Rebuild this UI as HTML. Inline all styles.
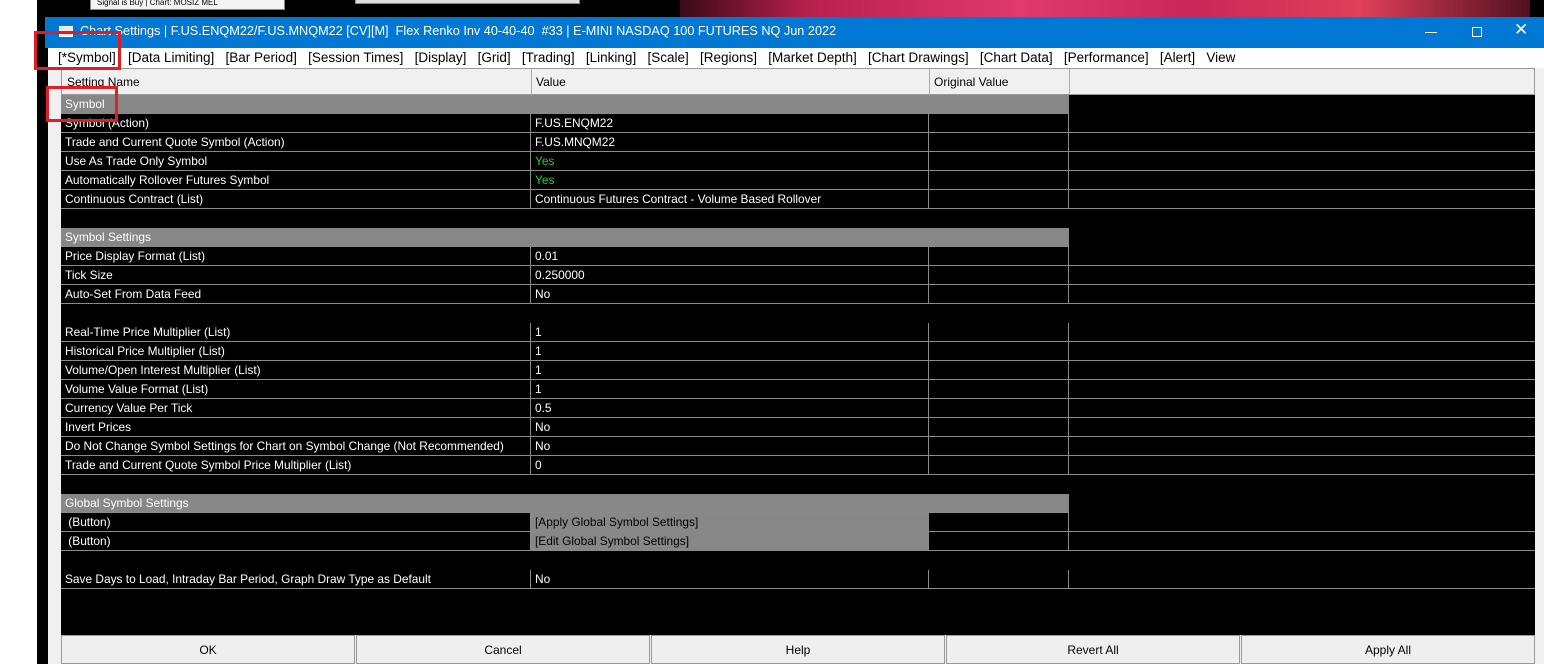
<!DOCTYPE html>
<html><head><meta charset="utf-8"><style>
*{margin:0;padding:0;box-sizing:border-box}
body{width:1544px;height:664px;overflow:hidden;background:#fff;position:relative;font-family:"Liberation Sans",sans-serif;font-size:11.9px}
.a{position:absolute}
.r{position:absolute;left:61px;width:1474px;height:19px;background:#000;color:#fff}
.c{position:absolute;top:0;height:19px;line-height:19px;padding-left:4px;border-right:1px solid #8a8a8a;border-bottom:1px solid #8a8a8a;white-space:nowrap;overflow:hidden}
.c1{left:0;width:470px}.c2{left:470px;width:398px}.c3{left:868px;width:140px}.c4{left:1008px;width:466px;border-right:none}
.sec .c1{width:1008px;background:#878787;border-right:none}
.g{color:#1fd61f}
.btn{position:absolute;top:635px;height:29px;width:294px;background:#efefef;border:1px solid #999;text-align:center;line-height:28px;color:#000;font-size:12px}
.m{position:absolute;top:50px;font-size:13.5px;color:#000;white-space:nowrap}
</style></head><body>
<div class="a" style="left:37px;top:0;width:1507px;height:664px;background:#000"></div>
<div class="a" style="left:680px;top:0;width:850px;height:17px;background:linear-gradient(90deg,#3a0a18,#b8204e 15%,#e03a70 40%,#c8285a 60%,#e0405a 80%,#501020)"></div>
<div class="a" style="left:90px;top:0;width:195px;height:10px;background:#f4f4f4;border:1px solid #888;border-top:none;font-size:8px;line-height:6px;padding-left:6px;overflow:hidden">Signal is Buy | Chart: MOSIZ MEL</div>
<div class="a" style="left:355px;top:0;width:225px;height:4px;background:#ddd;border:1px solid #888;border-top:none"></div>
<div class="a" style="left:45px;top:17px;width:1499px;height:31px;background:#0078d4"></div>
<div class="a" style="left:59px;top:26px;width:14px;height:11px;background:#e8e8e8;border:1px solid #fff"></div>
<div class="a" style="left:80px;top:24px;color:#fff;font-size:12.7px;white-space:nowrap">Chart Settings | F.US.ENQM22/F.US.MNQM22 [CV][M]&nbsp; Flex Renko Inv 40-40-40&nbsp; #33 | E-MINI NASDAQ 100 FUTURES NQ Jun 2022</div>
<div class="a" style="left:1425px;top:32px;width:12px;height:1px;background:#fff"></div>
<div class="a" style="left:1472px;top:27px;width:10px;height:10px;border:1px solid #fff"></div>
<div class="a" style="left:1514px;top:20px;color:#fff;font-size:17px">✕</div>
<div class="a" style="left:48px;top:48px;width:1496px;height:616px;background:#f0f0f0"></div>
<div class="a" style="left:48px;top:48px;width:1496px;height:20px;background:#fff"></div>
<div class="m" style="left:58px">[*Symbol]</div>
<div class="m" style="left:128px">[Data Limiting]&nbsp;&nbsp; [Bar Period]&nbsp;&nbsp; [Session Times]&nbsp;&nbsp; [Display]&nbsp;&nbsp; [Grid]&nbsp;&nbsp; [Trading]&nbsp;&nbsp; [Linking]&nbsp;&nbsp; [Scale]&nbsp;&nbsp; [Regions]&nbsp;&nbsp; [Market Depth]&nbsp;&nbsp; [Chart Drawings]&nbsp;&nbsp; [Chart Data]&nbsp;&nbsp; [Performance]&nbsp;&nbsp; [Alert]&nbsp;&nbsp; View</div>
<div class="a" style="left:61px;top:68px;width:1474px;height:567px;background:#000"></div>
<div class="a" style="left:61px;top:68px;width:1474px;height:27px;background:#f0f0f0;border:1px solid #999;font-size:12px">
<div class="a" style="left:5px;top:6px">Setting Name</div>
<div class="a" style="left:469px;top:0;height:26px;border-left:1px solid #aaa;padding:6px 4px">Value</div>
<div class="a" style="left:867px;top:0;height:26px;border-left:1px solid #aaa;padding:6px 4px">Original Value</div>
<div class="a" style="left:1007px;top:0;height:26px;border-left:1px solid #aaa"></div>
</div>

<div class="r sec" style="top:95px"><div class="c c1">Symbol</div></div>
<div class="r" style="top:114px"><div class="c c1">Symbol (Action)</div><div class="c c2">F.US.ENQM22</div><div class="c c3"></div><div class="c c4"></div></div>
<div class="r" style="top:133px"><div class="c c1">Trade and Current Quote Symbol (Action)</div><div class="c c2">F.US.MNQM22</div><div class="c c3"></div><div class="c c4"></div></div>
<div class="r" style="top:152px"><div class="c c1">Use As Trade Only Symbol</div><div class="c c2 g">Yes</div><div class="c c3"></div><div class="c c4"></div></div>
<div class="r" style="top:171px"><div class="c c1">Automatically Rollover Futures Symbol</div><div class="c c2 g">Yes</div><div class="c c3"></div><div class="c c4"></div></div>
<div class="r" style="top:190px"><div class="c c1">Continuous Contract (List)</div><div class="c c2">Continuous Futures Contract - Volume Based Rollover</div><div class="c c3"></div><div class="c c4"></div></div>
<div class="r sec" style="top:228px"><div class="c c1">Symbol Settings</div></div>
<div class="r" style="top:247px"><div class="c c1">Price Display Format (List)</div><div class="c c2">0.01</div><div class="c c3"></div><div class="c c4"></div></div>
<div class="r" style="top:266px"><div class="c c1">Tick Size</div><div class="c c2">0.250000</div><div class="c c3"></div><div class="c c4"></div></div>
<div class="r" style="top:285px"><div class="c c1">Auto-Set From Data Feed</div><div class="c c2">No</div><div class="c c3"></div><div class="c c4"></div></div>
<div class="r" style="top:323px"><div class="c c1">Real-Time Price Multiplier (List)</div><div class="c c2">1</div><div class="c c3"></div><div class="c c4"></div></div>
<div class="r" style="top:342px"><div class="c c1">Historical Price Multiplier (List)</div><div class="c c2">1</div><div class="c c3"></div><div class="c c4"></div></div>
<div class="r" style="top:361px"><div class="c c1">Volume/Open Interest Multiplier (List)</div><div class="c c2">1</div><div class="c c3"></div><div class="c c4"></div></div>
<div class="r" style="top:380px"><div class="c c1">Volume Value Format (List)</div><div class="c c2">1</div><div class="c c3"></div><div class="c c4"></div></div>
<div class="r" style="top:399px"><div class="c c1">Currency Value Per Tick</div><div class="c c2">0.5</div><div class="c c3"></div><div class="c c4"></div></div>
<div class="r" style="top:418px"><div class="c c1">Invert Prices</div><div class="c c2">No</div><div class="c c3"></div><div class="c c4"></div></div>
<div class="r" style="top:437px"><div class="c c1">Do Not Change Symbol Settings for Chart on Symbol Change (Not Recommended)</div><div class="c c2">No</div><div class="c c3"></div><div class="c c4"></div></div>
<div class="r" style="top:456px"><div class="c c1">Trade and Current Quote Symbol Price Multiplier (List)</div><div class="c c2">0</div><div class="c c3"></div><div class="c c4"></div></div>
<div class="r sec" style="top:494px"><div class="c c1">Global Symbol Settings</div></div>
<div class="r" style="top:513px"><div class="c c1">&nbsp;(Button)</div><div class="c c2" style="background:#878787;color:#000">[Apply Global Symbol Settings]</div><div class="c c3"></div><div class="c c4"></div></div>
<div class="r" style="top:532px"><div class="c c1">&nbsp;(Button)</div><div class="c c2" style="background:#878787;color:#000">[Edit Global Symbol Settings]</div><div class="c c3"></div><div class="c c4"></div></div>
<div class="r" style="top:570px"><div class="c c1">Save Days to Load, Intraday Bar Period, Graph Draw Type as Default</div><div class="c c2">No</div><div class="c c3"></div><div class="c c4"></div></div>

<div class="btn" style="left:61px">OK</div>
<div class="btn" style="left:356px">Cancel</div>
<div class="btn" style="left:651px">Help</div>
<div class="btn" style="left:946px">Revert All</div>
<div class="btn" style="left:1241px">Apply All</div>

<div class="a" style="left:34px;top:31px;width:87px;height:39px;border:3px solid #e01c24"></div>
<div class="a" style="left:46px;top:86px;width:72px;height:36px;border:3px solid #e01c24"></div>
</body></html>
